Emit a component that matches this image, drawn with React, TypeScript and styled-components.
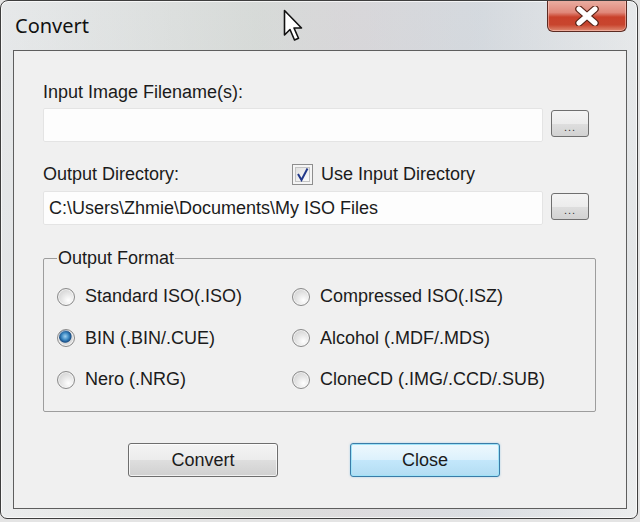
import styled, { createGlobalStyle } from "styled-components";

const GlobalStyle = createGlobalStyle`
  html, body {
    margin: 0;
    padding: 0;
    background: #e4e4e4;
  }
  body {
    font-family: "Liberation Sans", Arial, sans-serif;
  }
`;

const formats = [
  { label: "Standard ISO(.ISO)", checked: false },
  { label: "Compressed ISO(.ISZ)", checked: false },
  { label: "BIN (.BIN/.CUE)", checked: true },
  { label: "Alcohol (.MDF/.MDS)", checked: false },
  { label: "Nero (.NRG)", checked: false },
  { label: "CloneCD (.IMG/.CCD/.SUB)", checked: false },
];

export default function App() {
  return (
    <>
      <GlobalStyle />
      <Window>
        <TitleBar>
          <Title>Convert</Title>
          <CloseButton>
            <svg width="26" height="20" viewBox="0 0 26 20">
              <path
                d="M5 3 L21 17 M21 3 L5 17"
                stroke="#5a2418"
                strokeWidth="7.5"
                strokeLinecap="round"
              />
              <path
                d="M5 3 L21 17 M21 3 L5 17"
                stroke="#ffffff"
                strokeWidth="5"
                strokeLinecap="round"
              />
            </svg>
          </CloseButton>
        </TitleBar>
        <Client>
          <Label>Input Image Filename(s):</Label>
          <FieldRow>
            <TextBox />
            <BrowseButton>...</BrowseButton>
          </FieldRow>
          <LabelRow>
            <Label>Output Directory:</Label>
            <CheckLabel>
              <CheckBox>
                <svg width="15" height="15" viewBox="0 0 15 15">
                  <path
                    d="M3 7 L6.5 13 L12.5 1.5"
                    fill="none"
                    stroke="#23398a"
                    strokeWidth="2"
                  />
                </svg>
              </CheckBox>
              Use Input Directory
            </CheckLabel>
          </LabelRow>
          <FieldRow>
            <TextBox>C:\Users\Zhmie\Documents\My ISO Files</TextBox>
            <BrowseButton>...</BrowseButton>
          </FieldRow>
          <GroupBox>
            <GroupLegend>Output Format</GroupLegend>
            <RadioGrid>
              {formats.map((f) => (
                <RadioItem key={f.label}>
                  <Radio $checked={f.checked} />
                  {f.label}
                </RadioItem>
              ))}
            </RadioGrid>
          </GroupBox>
          <ButtonRow>
            <PushButton>Convert</PushButton>
            <PushButton $default>Close</PushButton>
          </ButtonRow>
        </Client>
        <Cursor width="22" height="34" viewBox="0 0 22 34">
          <path
            d="M1.5 1.5 L1.5 26 L7 20.5 L11.5 31 L15.5 29.3 L11 19 L18.5 19 Z"
            fill="#ffffff"
            stroke="#111"
            strokeWidth="1.6"
            strokeLinejoin="round"
          />
        </Cursor>
      </Window>
    </>
  );
}

const Window = styled.div`
  position: relative;
  width: 638px;
  height: 519px;
  box-sizing: border-box;
  display: flex;
  flex-direction: column;
  border: 1px solid #3e3e3e;
  border-radius: 8px 8px 7px 7px;
  overflow: hidden;
  background: linear-gradient(
      90deg,
      rgba(255, 255, 255, 0.3) 0%,
      rgba(200, 205, 190, 0.25) 40%,
      rgba(205, 190, 195, 0.25) 55%,
      rgba(190, 200, 215, 0.25) 75%,
      rgba(255, 255, 255, 0.3) 100%
    ),
    linear-gradient(180deg, #dcdfe1 0%, #d8dbdd 50%, #e3e5e6 100%);
  box-shadow: inset 0 0 0 1px rgba(255, 255, 255, 0.7);
`;

const TitleBar = styled.div`
  height: 49px;
  flex: none;
  display: flex;
  justify-content: space-between;
  align-items: flex-start;
  padding: 0 10px 0 14px;
`;

const Title = styled.div`
  margin-top: 13px;
  font-family: "Noto Sans", "Open Sans", sans-serif;
  font-size: 20px;
  line-height: 24px;
  color: #111;
`;

const CloseButton = styled.div`
  width: 80px;
  height: 32px;
  margin-top: -1px;
  box-sizing: border-box;
  display: flex;
  align-items: center;
  justify-content: center;
  border: 1px solid #5b2a22;
  border-top: none;
  border-radius: 0 0 6px 6px;
  background: linear-gradient(
    180deg,
    #eab0a4 0%,
    #e0887a 40%,
    #c9412b 55%,
    #c8452e 80%,
    #df8a72 100%
  );
  box-shadow: inset 0 0 0 1px rgba(255, 210, 200, 0.5);
`;

const Client = styled.div`
  flex: 1;
  margin: 0 10px 9px 12px;
  padding: 30px 0 0 29px;
  border: 1px solid #5e5e5e;
  background: #f0f0f0;
  display: flex;
  flex-direction: column;
  align-items: flex-start;
  color: #1b1b1b;
  font-size: 18px;
`;

const Label = styled.div`
  line-height: 22px;
  height: 22px;
`;

const FieldRow = styled.div`
  margin-top: 5px;
  display: flex;
  align-items: center;
  gap: 8px;
`;

const TextBox = styled.div`
  width: 500px;
  height: 34px;
  box-sizing: border-box;
  padding: 0 5px;
  line-height: 32px;
  background: #fdfdfd;
  border: 1px solid #e4e4e4;
  border-radius: 2px;
  white-space: nowrap;
`;

const BrowseButton = styled.div`
  width: 38px;
  height: 27px;
  margin-top: -3px;
  box-sizing: border-box;
  border: 1px solid #6f6f6f;
  border-radius: 3px;
  background: linear-gradient(180deg, #f4f4f4 0%, #ececec 50%, #dedede 51%, #d2d2d2 100%);
  font-size: 11px;
  line-height: 11px;
  letter-spacing: 1px;
  text-align: center;
  padding-top: 11px;
  color: #333;
`;

const LabelRow = styled.div`
  margin-top: 20px;
  height: 24px;
  display: flex;
  align-items: center;
  gap: 113px;
`;

const CheckLabel = styled.div`
  display: flex;
  align-items: center;
  gap: 8px;
  line-height: 22px;
`;

const CheckBox = styled.span`
  width: 21px;
  height: 21px;
  box-sizing: border-box;
  border: 1px solid #8e8e8e;
  background: linear-gradient(135deg, #dadada 0%, #f4f4f4 60%, #ffffff 100%);
  box-shadow: inset 0 0 0 2px #f5f5f5, inset 0 0 0 3px #c4c4c4;
  display: flex;
  align-items: center;
  justify-content: center;
`;

const GroupBox = styled.fieldset`
  margin: 22px 0 0 0;
  width: 553px;
  box-sizing: border-box;
  padding: 0 0 10px 13px;
  border: 1px solid #9d9d9d;
  border-radius: 2px;
`;

const GroupLegend = styled.legend`
  padding: 0 1px;
  line-height: 22px;
  font-size: 18px;
`;

const RadioGrid = styled.div`
  margin-top: 7px;
  display: grid;
  grid-template-columns: 235px auto;
  grid-auto-rows: 41.5px;
`;

const RadioItem = styled.div`
  display: flex;
  align-items: center;
  gap: 10px;
  white-space: nowrap;
`;

const Radio = styled.span<{ $checked?: boolean }>`
  width: 18px;
  height: 18px;
  box-sizing: border-box;
  border-radius: 50%;
  border: 1px solid #8a8a8a;
  background: ${(p) =>
    p.$checked
      ? "radial-gradient(circle at 45% 40%, #9fd0f0 0%, #3b88c2 28%, #1b4f86 45%, #d8d8d8 52%, #f2f2f2 100%)"
      : "radial-gradient(circle at 65% 70%, #ffffff 0%, #e8e8e8 40%, #c8c8c8 100%)"};
  box-shadow: inset 0 0 0 1px rgba(255, 255, 255, 0.6);
`;

const ButtonRow = styled.div`
  margin: 31px 0 0 85px;
  display: flex;
  gap: 72px;
`;

const PushButton = styled.div<{ $default?: boolean }>`
  width: 150px;
  height: 34px;
  box-sizing: border-box;
  border: 1px solid ${(p) => (p.$default ? "#3a7ca8" : "#6e6e6e")};
  border-radius: 3px;
  text-align: center;
  line-height: 32px;
  font-size: 18px;
  color: #1b1b1b;
  background: ${(p) =>
    p.$default
      ? "linear-gradient(180deg, #eef8fd 0%, #dcf1fc 50%, #c3e7fb 51%, #b3ddf3 100%)"
      : "linear-gradient(180deg, #f4f4f4 0%, #ececec 50%, #dedede 51%, #d0d0d0 100%)"};
  box-shadow: ${(p) =>
    p.$default
      ? "inset 0 0 0 1px #9fe3f8, 0 0 2px rgba(80, 170, 220, 0.5)"
      : "inset 0 0 0 1px rgba(255, 255, 255, 0.7)"};
`;

const Cursor = styled.svg`
  position: absolute;
  left: 282px;
  top: 8px;
`;
